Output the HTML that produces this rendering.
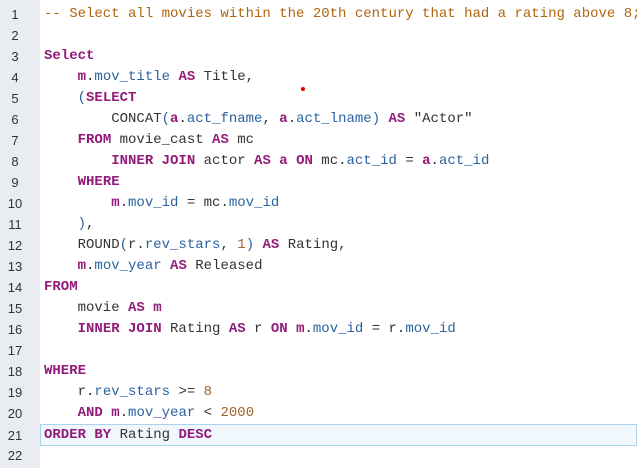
<!DOCTYPE html><html><head><style>
body{margin:0;width:637px;height:468px;background:#fff;overflow:hidden;font-family:"Liberation Mono",monospace;font-size:14px}
.g{position:absolute;left:0;top:0;width:40px;height:468px;background:#e9ecf0}
.l{position:absolute;left:0;height:21px;line-height:21px;white-space:pre;width:637px}
.n{display:inline-block;width:30px;text-align:center;color:#333;font-family:"Liberation Sans",sans-serif;font-size:13px}
.c{position:absolute;left:44px;top:0;color:#333}
.k{color:#921a78;font-weight:bold}
.cm{color:#b0650f}
.i{color:#2a62a0}
.p{color:#2a62a0}
.num{color:#a0642a}
.hl{position:absolute;left:40px;top:424px;width:597px;height:22px;background:#f1f8fd;border:1px solid #a9d3ef;box-sizing:border-box}
.dot{position:absolute;left:301px;top:87px;width:4px;height:4px;border-radius:2px;background:#d00}
</style></head><body>
<div class="g"></div><div class="hl"></div><div class="dot"></div>
<div class="l" style="top:4px"><span class="n">1</span><span class="c"><span class="cm">-- Select all movies within the 20th century that had a rating above 8;</span></span></div>
<div class="l" style="top:25px"><span class="n">2</span></div>
<div class="l" style="top:46px"><span class="n">3</span><span class="c"><span class="k">Select</span></span></div>
<div class="l" style="top:67px"><span class="n">4</span><span class="c">    <span class="k">m</span>.<span class="i">mov_title</span> <span class="k">AS</span> Title,</span></div>
<div class="l" style="top:88px"><span class="n">5</span><span class="c">    <span class="p">(</span><span class="k">SELECT</span></span></div>
<div class="l" style="top:109px"><span class="n">6</span><span class="c">        CONCAT<span class="p">(</span><span class="k">a</span>.<span class="i">act_fname</span>, <span class="k">a</span>.<span class="i">act_lname</span><span class="p">)</span> <span class="k">AS</span> "Actor"</span></div>
<div class="l" style="top:130px"><span class="n">7</span><span class="c">    <span class="k">FROM</span> movie_cast <span class="k">AS</span> mc</span></div>
<div class="l" style="top:151px"><span class="n">8</span><span class="c">        <span class="k">INNER JOIN</span> actor <span class="k">AS</span> <span class="k">a</span> <span class="k">ON</span> mc.<span class="i">act_id</span> = <span class="k">a</span>.<span class="i">act_id</span></span></div>
<div class="l" style="top:172px"><span class="n">9</span><span class="c">    <span class="k">WHERE</span></span></div>
<div class="l" style="top:193px"><span class="n">10</span><span class="c">        <span class="k">m</span>.<span class="i">mov_id</span> = mc.<span class="i">mov_id</span></span></div>
<div class="l" style="top:214px"><span class="n">11</span><span class="c">    <span class="p">)</span>,</span></div>
<div class="l" style="top:235px"><span class="n">12</span><span class="c">    ROUND<span class="p">(</span>r.<span class="i">rev_stars</span>, <span class="num">1</span><span class="p">)</span> <span class="k">AS</span> Rating,</span></div>
<div class="l" style="top:256px"><span class="n">13</span><span class="c">    <span class="k">m</span>.<span class="i">mov_year</span> <span class="k">AS</span> Released</span></div>
<div class="l" style="top:277px"><span class="n">14</span><span class="c"><span class="k">FROM</span></span></div>
<div class="l" style="top:298px"><span class="n">15</span><span class="c">    movie <span class="k">AS</span> <span class="k">m</span></span></div>
<div class="l" style="top:319px"><span class="n">16</span><span class="c">    <span class="k">INNER JOIN</span> Rating <span class="k">AS</span> r <span class="k">ON</span> <span class="k">m</span>.<span class="i">mov_id</span> = r.<span class="i">mov_id</span></span></div>
<div class="l" style="top:340px"><span class="n">17</span></div>
<div class="l" style="top:361px"><span class="n">18</span><span class="c"><span class="k">WHERE</span></span></div>
<div class="l" style="top:382px"><span class="n">19</span><span class="c">    r.<span class="i">rev_stars</span> &gt;= <span class="num">8</span></span></div>
<div class="l" style="top:403px"><span class="n">20</span><span class="c">    <span class="k">AND</span> <span class="k">m</span>.<span class="i">mov_year</span> &lt; <span class="num">2000</span></span></div>
<div class="l" style="top:425px"><span class="n">21</span><span class="c"><span class="k">ORDER BY</span> Rating <span class="k">DESC</span></span></div>
<div class="l" style="top:445px"><span class="n">22</span></div>
</body></html>
